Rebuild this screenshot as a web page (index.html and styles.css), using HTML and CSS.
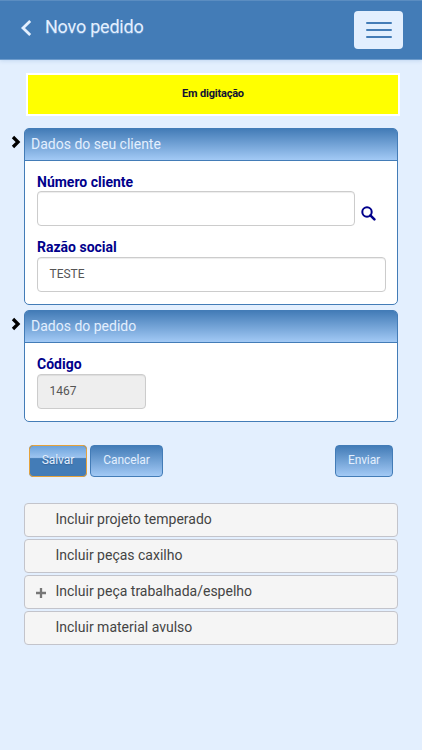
FILE: index.html
```html
<!DOCTYPE html>
<html lang="pt-BR">
<head>
<meta charset="utf-8">
<title>Novo pedido</title>
<link rel="stylesheet" href="styles.css">
</head>
<body>
<header class="topbar">
  <svg class="back" viewBox="0 0 12 18"><path d="M10.2 2 3 9l7.2 7" fill="none" stroke="currentColor" stroke-width="2.8"/></svg>
  <h1>Novo pedido</h1>
  <button class="menu" aria-label="Menu"><span></span><span></span><span></span></button>
</header>
<main>
  <div class="status">Em digitação</div>
  <section class="panel client">
    <svg class="marker" viewBox="0 0 10 14"><path d="M2 2l5 5-5 5" fill="none" stroke="currentColor" stroke-width="3.3"/></svg>
    <h2><span>Dados do seu cliente</span></h2>
    <div class="fields">
      <label>Número cliente</label>
      <div class="row">
        <div class="input number"></div>
        <svg class="search" viewBox="0 0 15 15"><circle cx="6" cy="6" r="4.7" fill="none" stroke="currentColor" stroke-width="2"/><path d="M9.4 9.4l4 4" stroke="currentColor" stroke-width="2.5" stroke-linecap="round"/></svg>
      </div>
      <label class="second">Razão social</label>
      <div class="input">TESTE</div>
    </div>
  </section>
  <section class="panel order">
    <svg class="marker" viewBox="0 0 10 14"><path d="M2 2l5 5-5 5" fill="none" stroke="currentColor" stroke-width="3.3"/></svg>
    <h2><span>Dados do pedido</span></h2>
    <div class="fields">
      <label>Código</label>
      <div class="input code">1467</div>
    </div>
  </section>
  <div class="actions">
    <button class="btn save">Salvar</button>
    <button class="btn cancel">Cancelar</button>
    <button class="btn send">Enviar</button>
  </div>
  <ul class="list">
    <li><span>Incluir projeto temperado</span></li>
    <li><span>Incluir peças caxilho</span></li>
    <li><svg class="plus" viewBox="0 0 10 10"><path d="M5 0v10M0 5h10" stroke="currentColor" stroke-width="2.3"/></svg><span>Incluir peça trabalhada/espelho</span></li>
    <li><span>Incluir material avulso</span></li>
  </ul>
</main>
</body>
</html>
```
FILE: styles.css
```css
* { box-sizing: border-box; }
body {
  margin: 0;
  min-height: 750px;
  background: #e3effe;
  font-family: Roboto, "Liberation Sans", sans-serif;
  color: #444;
}
button { font-family: inherit; margin: 0; }
.topbar {
  display: flex;
  align-items: center;
  height: 60px;
  padding: 0 19px 0 20px;
  background: #437cb7;
  border-top: 1px solid #5b8dc1;
  border-bottom: 1px solid #6e9ccc;
  box-shadow: 0 1px 4px rgba(67, 124, 183, .2);
  color: #e3effe;
}
.back { width: 12px; height: 18px; margin-top: -4px; }
h1 {
  margin: -6px 0 0 13px;
  font-size: 18px;
  line-height: 24px;
  font-weight: 400;
  letter-spacing: -.22px;
  text-shadow: 0 1px 1px rgba(190, 220, 255, .35);
}
.menu {
  display: flex;
  flex-direction: column;
  align-items: center;
  justify-content: center;
  gap: 5px;
  width: 49px;
  height: 38px;
  margin-left: auto;
  padding: 0;
  border: 0;
  border-radius: 4px;
  background: #e3effe;
}
.menu span { width: 26px; height: 2px; border-radius: 1px; background: #437cb7; }
main { padding: 13px 24px 0; }
.status {
  height: 43px;
  margin: 0 -2px 0 2px;
  border: 2px solid #fff;
  background: #ff0;
  color: #111133;
  text-align: center;
  font-size: 11px;
  font-weight: 700;
  line-height: 38px;
  letter-spacing: -.2px;
}
.panel {
  position: relative;
  width: 374px;
  border: 1.5px solid #437cb7;
  border-radius: 5px;
  background: #fff;
}
.client { height: 177px; margin-top: 12px; }
.order { height: 112px; margin-top: 5px; }
.marker { position: absolute; left: -14px; top: 6px; width: 10px; height: 14px; color: #000; }
h2 {
  height: 32px;
  margin: 0;
  padding-left: 6px;
  border-bottom: 1px solid #437cb7;
  border-radius: 3px 3px 0 0;
  background: linear-gradient(#437cb7, #a2c9f5);
  color: #e3effe;
  font-size: 14px;
  font-weight: 400;
  line-height: 31px;
}
.fields { padding: 12px 12px 0; }
label {
  display: block;
  height: 18px;
  color: #00008b;
  font-size: 14px;
  font-weight: 700;
  line-height: 18px;
}
.second { height: 19px; margin-top: 12px; }
.row { display: flex; }
.input {
  width: 349px;
  height: 35px;
  padding-left: 11.5px;
  border: 1px solid #ccc;
  border-radius: 4px;
  background: #fff;
  box-shadow: inset 0 1px 1px rgba(0, 0, 0, .075);
  color: #555;
  font-size: 12px;
  line-height: 32px;
}
.number { width: 318px; }
.code { width: 109px; margin-top: 1px; background: #eee; }
.search { width: 15px; height: 15px; margin: 15px 0 0 6px; color: #00008b; }
.actions { display: flex; height: 32px; margin: 23px 5px 0 5px; }
.btn {
  height: 32px;
  padding: 0 0 2px;
  border: 1px solid #437cb7;
  border-radius: 4px;
  background: linear-gradient(#437cb7, #a2c9f5);
  color: #e3effe;
  font-size: 12px;
  line-height: 28px;
  letter-spacing: -.1px;
}
.save {
  width: 58px;
  background: linear-gradient(#6da3db, #9cc4f0 38%, #437cb7 42%);
  outline: 1.5px solid #e5a23b;
  outline-offset: -1px;
  text-shadow: 0 1px 1px rgba(40, 80, 130, .5);
}
.cancel { width: 73px; margin-left: 3px; }
.send { width: 58px; margin-left: auto; }
.list { display: grid; gap: 2.3px; margin: 25.5px 0 0; padding: 0; list-style: none; }
.list li {
  position: relative;
  width: 374px;
  height: 34px;
  padding-left: 30.5px;
  border: 1px solid #c3c4cb;
  border-radius: 4px;
  background: #f5f5f5;
  font-size: 14px;
  line-height: 31px;
}
.plus { position: absolute; left: 11px; top: 12px; width: 10px; height: 10px; color: #777; }
```
